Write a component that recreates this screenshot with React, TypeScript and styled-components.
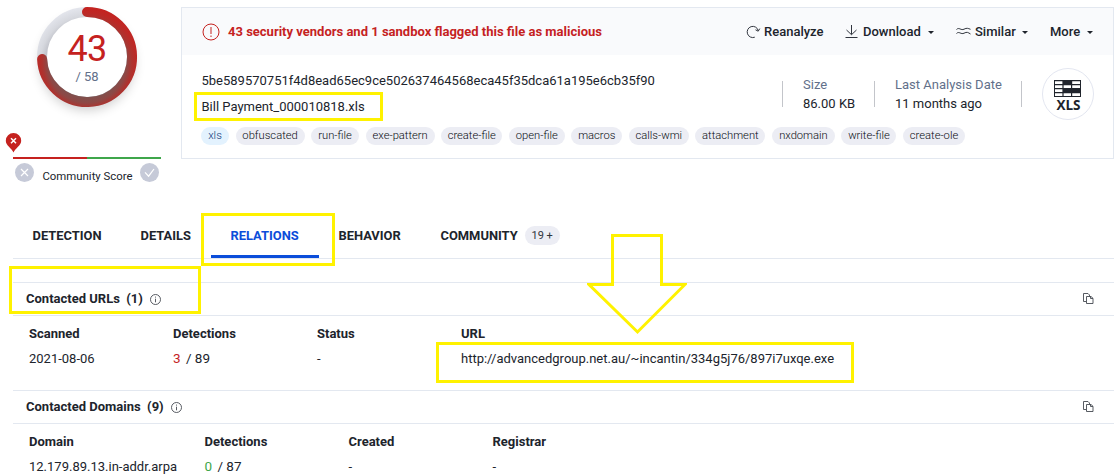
import React from "react";
import styled, { createGlobalStyle } from "styled-components";

const Global = createGlobalStyle`
  * { box-sizing: border-box; }
  html, body { margin: 0; background: #fff; }
  body { overflow: hidden; font-family: Roboto, "Liberation Sans", sans-serif; font-size: 13px; line-height: 20px; color: #20242c; }
`;

const Page = styled.div`
  position: relative;
  width: 1118px;
  height: 474px;
  padding: 7px 4px 0 13px;
  overflow: hidden;
`;

const Top = styled.div`
  display: flex;
  height: 206px;
`;

const ScorePanel = styled.aside`
  width: 168px;
  flex: none;
`;

const Gauge = styled.div`
  display: grid;
  width: 148px;
  height: 126px;
  place-items: start center;
  > * { grid-area: 1 / 1; }
`;

const Ring = styled.svg`
  width: 148px;
  height: 125px;
  overflow: visible;
`;

const Count = styled.div`
  display: flex;
  flex-direction: column;
  align-items: center;
  padding-top: 24px;
  color: #c5221f;
  font-size: 36px;
  font-weight: 400;
  line-height: 36px;
  letter-spacing: -0.8px;
`;

const Total = styled.span`
  margin-top: 1px;
  color: #62708a;
  font-size: 13px;
  font-weight: 400;
  line-height: 18px;
  letter-spacing: 0;
`;

const Marker = styled.svg`
  display: block;
  width: 17px;
  height: 20px;
  margin: 0 0 4px -8px;
`;

const Scale = styled.div`
  width: 148px;
  height: 2px;
  background: linear-gradient(90deg, #c5221f 50%, #3fa64b 50%);
`;

const Votes = styled.div`
  display: flex;
  align-items: center;
  justify-content: space-between;
  width: 148px;
  height: 20px;
  margin-top: 3px;
  padding: 0 2px 0 2px;
`;

const VoteIcon = styled.svg`
  width: 19px;
  height: 19px;
  flex: none;
`;

const VoteLabel = styled.span`
  padding: 8px 0 0 1px;
  font-size: 11.4px;
  white-space: nowrap;
`;

const Card = styled.section`
  flex: 1;
  height: 152px;
  border: 1px solid #e3e8f0;
`;

const CardHeader = styled.header`
  display: flex;
  align-items: center;
  height: 47px;
  padding: 0 20px;
  background: #f9fafc;
`;

const Alert = styled.div`
  display: flex;
  align-items: center;
  gap: 8px;
  flex: 1;
  color: #c5221f;
  font-weight: 700;
  white-space: nowrap;
`;

const Action = styled.div<{ $gap: number; $width: number }>`
  display: flex;
  align-items: center;
  gap: ${(p) => p.$gap}px;
  width: ${(p) => p.$width}px;
  font-weight: 500;
  white-space: nowrap;
`;

const Caret = styled.i`
  margin: 1px 0 0 2px;
  border: 3px solid transparent;
  border-top-color: #20242c;
  border-bottom: 0;
`;

const Info = styled.div`
  display: flex;
  height: 70px;
  padding: 13px 19px 0;
`;

const Identity = styled.div`
  flex: 1;
  padding-left: 0.5px;
  line-height: 26px;
  white-space: nowrap;
`;

const Fact = styled.div<{ $width: number }>`
  width: ${(p) => p.$width}px;
  height: 26px;
  margin-top: 13px;
  padding-left: 20px;
  border-left: 1px solid #c3c5ca;
  white-space: nowrap;
`;

const FactText = styled.dl`
  margin: -6px 0 0;
  line-height: 19px;
  dt { color: #62708a; }
  dd { margin: 0; }
`;

const FileType = styled.svg`
  width: 52px;
  height: 52px;
  flex: none;
`;

const Tags = styled.div`
  display: flex;
  gap: 6.55px;
  padding: 2px 19px;
`;

const Tag = styled.span<{ $width: number; $blue?: boolean }>`
  width: ${(p) => p.$width}px;
  height: 18px;
  flex: none;
  border-radius: 9px;
  background: ${(p) => (p.$blue ? "#e3f2fe" : "#ecedf4")};
  color: ${(p) => (p.$blue ? "#0d3878" : "#080b12")};
  font-size: 11.2px;
  font-weight: 300;
  line-height: 17px;
  text-align: center;
  white-space: nowrap;
`;

const Tabs = styled.nav`
  display: flex;
  height: 46px;
  border-bottom: 1px solid #e3e8f0;
`;

const Tab = styled.div<{ $width: number; $active?: boolean }>`
  display: flex;
  align-items: center;
  gap: 7px;
  width: ${(p) => p.$width}px;
  height: 45px;
  padding: 3px 0 0 19.5px;
  border-bottom: 3px solid ${(p) => (p.$active ? "#0b4dda" : "transparent")};
  color: ${(p) => (p.$active ? "#0b4dda" : "#20242c")};
  font-size: 12.9px;
  font-weight: 700;
`;

const Badge = styled.span`
  width: 35px;
  height: 19px;
  border-radius: 10px;
  background: #ecedf4;
  color: #30343d;
  font-size: 11px;
  font-weight: 400;
  line-height: 19px;
  text-align: center;
`;

const Section = styled.section<{ $top?: number }>`
  margin-top: ${(p) => p.$top ?? 0}px;
  border-top: 1px solid #e3e8f0;
`;

const SectionTitle = styled.h2`
  display: flex;
  align-items: center;
  height: 33px;
  margin: 0;
  padding: 0 20px 0 13px;
  border-bottom: 1px solid #e3e8f0;
  font-size: 13px;
  font-weight: 700;
  white-space: pre;
  svg:first-of-type { margin: 1px auto 0 7px; }
`;

const Table = styled.div<{ $cols: string }>`
  display: grid;
  grid-template-columns: ${(p) => p.$cols};
  grid-template-rows: 25px 25px;
  height: 74px;
  padding: 5px 16px 0;
  line-height: 25px;
  white-space: nowrap;
`;

const Th = styled.span`
  font-weight: 700;
`;

const Ratio = styled.span<{ $color: string }>`
  font-size: 13.5px;
  b { margin-right: 2px; color: ${(p) => p.$color}; font-weight: 400; }
`;

const Highlight = styled.div<{ $x: number; $y: number; $w: number; $h: number }>`
  position: absolute;
  left: ${(p) => p.$x}px;
  top: ${(p) => p.$y}px;
  width: ${(p) => p.$w}px;
  height: ${(p) => p.$h}px;
  border: 3px solid #fff200;
`;

const Arrow = styled.svg`
  position: absolute;
  left: 587px;
  top: 234px;
  width: 100px;
  height: 101px;
  overflow: hidden;
`;

const InfoIcon = () => (
  <svg width="11" height="11" viewBox="0 0 11 11" fill="none" stroke="#454951" strokeWidth="0.9">
    <circle cx="5.5" cy="5.5" r="5" />
    <path d="M5.5 4.7V8.3M5.5 2.6V3.6" />
  </svg>
);

const CopyIcon = () => (
  <svg width="11" height="12" viewBox="0 0 11 12" fill="none" stroke="#454951" strokeWidth="0.9">
    <path d="M3 8.5H.5V.5H5L6.5 2V3.5" />
    <path d="M3.5 3.5H8L10 5.3V10.5H3.5Z" />
    <path d="M7.5 3.5V5.5H10" />
  </svg>
);

const tags: [string, number][] = [
  ["xls", 28], ["obfuscated", 69], ["run-file", 48], ["exe-pattern", 69], ["create-file", 61],
  ["open-file", 56], ["macros", 51], ["calls-wmi", 60], ["attachment", 70], ["nxdomain", 63],
  ["write-file", 55], ["create-ole", 62],
];

export default function App() {
  return (
    <Page>
      <Global />
      <Top>
        <ScorePanel>
          <Gauge>
            <Ring viewBox="0 0 148 125">
              <defs>
                <radialGradient id="redShade" gradientUnits="userSpaceOnUse" cx="74" cy="56" r="56">
                  <stop offset="0.58" stopColor="#7a5350" />
                  <stop offset="0.71" stopColor="#8e4845" />
                  <stop offset="0.8" stopColor="#ad332f" />
                  <stop offset="0.9" stopColor="#be2825" />
                  <stop offset="1" stopColor="#c5221f" />
                </radialGradient>
                <radialGradient id="trackShade" gradientUnits="userSpaceOnUse" cx="74" cy="56" r="56">
                  <stop offset="0.7" stopColor="#b9bbc3" />
                  <stop offset="0.84" stopColor="#d6d8de" />
                  <stop offset="1" stopColor="#e4e6ed" />
                </radialGradient>
                <filter id="drop" x="-30%" y="-30%" width="160%" height="170%">
                  <feGaussianBlur stdDeviation="6" />
                </filter>
              </defs>
              <circle cx="74" cy="56" r="47" fill="#000" opacity="0.2" filter="url(#drop)" />
              <circle cx="74" cy="50" r="45" fill="#fff" stroke="url(#trackShade)" strokeWidth="10" />
              <path d="M74 5A45 45 0 1 1 29.1 52" fill="none" stroke="url(#redShade)" strokeWidth="10" strokeLinecap="round" />
            </Ring>
            <Count>
              43<Total>/ 58</Total>
            </Count>
          </Gauge>
          <Marker viewBox="0 0 17 20">
            <path d="M8.5 19.5C6.8 15.5.8 12.4.8 7.8a7.7 7.7 0 0 1 15.4 0C16.2 12.4 10.2 15.5 8.5 19.5Z" fill="#c5221f" />
            <path d="M6 5.3L11 10.3M11 5.3L6 10.3" stroke="#fff" strokeWidth="1.5" />
          </Marker>
          <Scale />
          <Votes>
            <VoteIcon viewBox="0 0 19 19" fill="none" stroke="#fff" strokeWidth="1.2">
              <circle cx="9.5" cy="9.5" r="9.5" fill="#c6cad8" stroke="none" />
              <path d="M6 6L13 13M13 6L6 13" />
            </VoteIcon>
            <VoteLabel>Community Score</VoteLabel>
            <VoteIcon viewBox="0 0 19 19" fill="none" stroke="#fff" strokeWidth="1.2">
              <circle cx="9.5" cy="9.5" r="9.5" fill="#c6cad8" stroke="none" />
              <path d="M5 9.3L8.6 13.2L14 6" />
            </VoteIcon>
          </Votes>
        </ScorePanel>
        <Card>
          <CardHeader>
            <Alert>
              <svg width="18" height="18" viewBox="0 0 18 18" fill="none" stroke="#c5221f">
                <circle cx="9" cy="9" r="8" />
                <path d="M9 4V11M9 12.5V14" />
              </svg>
              43 security vendors and 1 sandbox flagged this file as malicious
            </Alert>
            <Action $gap={3} $width={99}>
              <svg width="15" height="14" viewBox="0 0 15 14" fill="none" stroke="#30343d">
                <path d="M8.8 12.2A5.6 5.6 0 1 1 12.2 5.5" />
                <path d="M9.5 4.8L12.2 6.2L13.8 3.6" />
              </svg>
              Reanalyze
            </Action>
            <Action $gap={5} $width={111}>
              <svg width="13" height="15" viewBox="0 0 13 15" fill="none" stroke="#30343d">
                <path d="M6.5 1V10.5M1.5 6L6.5 10.7L11.5 6M.5 13.5H12.5" />
              </svg>
              Download <Caret />
            </Action>
            <Action $gap={4} $width={94}>
              <svg width="15" height="9" viewBox="0 0 15 9" fill="none" stroke="#30343d">
                <path d="M.5 2.5C3-.2 5 3.8 8 2.2S12 1.4 14.5 2.3" />
                <path d="M.5 6.5C3 3.8 5 7.8 8 6.2S12 5.4 14.5 7" />
              </svg>
              Similar <Caret />
            </Action>
            <Action $gap={5} $width={43}>
              More <Caret />
            </Action>
          </CardHeader>
          <Info>
            <Identity>
              <div>5be589570751f4d8ead65ec9ce502637464568eca45f35dca61a195e6cb35f90</div>
              <div>Bill Payment_000010818.xls</div>
            </Identity>
            <Fact $width={92}>
              <FactText><dt>Size</dt><dd>86.00 KB</dd></FactText>
            </Fact>
            <Fact $width={147}>
              <FactText><dt>Last Analysis Date</dt><dd>11 months ago</dd></FactText>
            </Fact>
            <Fact $width={21} />
            <FileType viewBox="0 0 52 52">
              <circle cx="26" cy="26" r="25.5" fill="#fff" stroke="#e3e6f0" />
              <path d="M12 12H39V29H12Z" fill="#20242c" />
              <path d="M13 13.3H20.4V16H13ZM30.2 13.3H38V16H30.2ZM13 17.2H20.4V20H13ZM21.6 17.2H29V20H21.6ZM30.2 17.2H38V20H30.2ZM13 21.2H20.4V24H13ZM13 25.2H20.4V28H13ZM21.6 25.2H29V28H21.6ZM30.2 25.2H38V28H30.2Z" fill="#fff" />
              <text x="26.5" y="42" textAnchor="middle" fontFamily="Open Sans, sans-serif" fontWeight="700" fontSize="13.5" fill="#20242c">XLS</text>
            </FileType>
          </Info>
          <Tags>
            {tags.map(([name, width], i) => (
              <Tag key={name} $width={width} $blue={i === 0}>{name}</Tag>
            ))}
          </Tags>
        </Card>
      </Top>
      <Tabs>
        <Tab $width={108}>DETECTION</Tab>
        <Tab $width={90}>DETAILS</Tab>
        <Tab $width={108} $active>RELATIONS</Tab>
        <Tab $width={102}>BEHAVIOR</Tab>
        <Tab $width={150}>COMMUNITY <Badge>19 +</Badge></Tab>
      </Tabs>
      <Section $top={23}>
        <SectionTitle>Contacted URLs  (1)<InfoIcon /><CopyIcon /></SectionTitle>
        <Table $cols="144px 144px 144px 1fr">
          <Th>Scanned</Th><Th>Detections</Th><Th>Status</Th><Th>URL</Th>
          <span>2021-08-06</span>
          <Ratio $color="#c5221f"><b>3</b> / 89</Ratio>
          <span>-</span>
          <span>http://advancedgroup.net.au/~incantin/334g5j76/897i7uxqe.exe</span>
        </Table>
      </Section>
      <Section>
        <SectionTitle>Contacted Domains  (9)<InfoIcon /><CopyIcon /></SectionTitle>
        <Table $cols="175.5px 144px 144px 1fr">
          <Th>Domain</Th><Th>Detections</Th><Th>Created</Th><Th>Registrar</Th>
          <span>12.179.89.13.in-addr.arpa</span>
          <Ratio $color="#3fa64b"><b>0</b> / 87</Ratio>
          <span>-</span>
          <span>-</span>
        </Table>
      </Section>
      <Highlight $x={194} $y={92} $w={189} $h={29} />
      <Highlight $x={201} $y={213} $w={134} $h={53} />
      <Highlight $x={9} $y={266} $w={192} $h={48} />
      <Highlight $x={436} $y={342} $w={418} $h={41} />
      <Arrow viewBox="0 0 100 101">
        <path d="M25.5 1.5H74.5V50.5H98L50.5 98L2 50.5H25.5Z" fill="none" stroke="#fff200" strokeWidth="3" />
      </Arrow>
    </Page>
  );
}
